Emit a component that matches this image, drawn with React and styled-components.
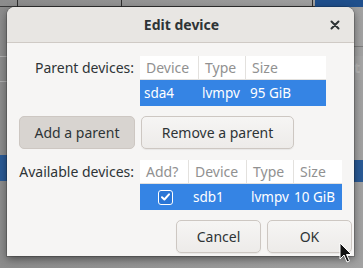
import React from "react"
import styled, { createGlobalStyle } from "styled-components"

const GlobalStyle = createGlobalStyle`
  html, body { margin: 0; padding: 0; }
  body {
    background: #959595;
    font-family: "Noto Sans", "Open Sans", sans-serif;
    color: #2e3436;
  }
`

const Desktop = styled.div`
  position: relative;
  width: 363px;
  height: 268px;
  overflow: hidden;
  background: linear-gradient(90deg, #8c8c8c 0%, #979797 50%, #a2a2a2 100%);
`

/* pieces of the dimmed window behind the dialog */
const Behind = styled.div`
  position: absolute;
  left: ${p => p.x}px;
  top: ${p => p.y}px;
  width: ${p => p.w}px;
  height: ${p => p.h}px;
  background: ${p => p.bg || "transparent"};
  border-bottom: ${p => (p.line ? `1px solid ${p.line}` : "none")};
  color: #b8b8b8;
  font-size: 14px;
  font-weight: bold;
  line-height: ${p => p.h}px;
  overflow: hidden;
`

const Dialog = styled.div`
  position: absolute;
  left: 7px;
  top: 7px;
  width: 347px;
  height: 249px;
  background: #f6f5f4;
  border-radius: 8px 8px 0 0;
  box-shadow: 0 0 0 1px rgba(0, 0, 0, 0.18), 0 3px 9px rgba(0, 0, 0, 0.45);
  display: flex;
  flex-direction: column;
  overflow: hidden;
`

const HeaderBar = styled.div`
  height: 36px;
  flex: none;
  display: flex;
  align-items: center;
  justify-content: center;
  position: relative;
  background: #e8e6e3;
  border-bottom: 1px solid #cfcac5;
  box-sizing: border-box;
`

const Title = styled.div`
  font-weight: bold;
  font-size: 14px;
  color: #2e3436;
  margin-left: 2px;
`

const CloseButton = styled.div`
  position: absolute;
  right: 14px;
  top: 13px;
  width: 10px;
  height: 10px;
  display: flex;
`

const Body = styled.div`
  flex: 1;
  padding: 13px 2px 0 12px;
  display: flex;
  flex-direction: column;
`

const FieldRow = styled.div`
  display: grid;
  grid-template-columns: 115px auto;
  column-gap: 6px;
  align-items: start;
  margin-bottom: ${p => p.gap || 0}px;
`

const Label = styled.div`
  text-align: right;
  font-size: 14px;
  height: 24px;
  line-height: 24px;
  white-space: nowrap;
`

const Table = styled.div`
  display: grid;
  grid-template-columns: ${p => p.cols};
  justify-self: start;
  background: #ffffff;
`

const HeadCell = styled.div`
  height: 24px;
  line-height: 24px;
  padding-left: 6px;
  font-size: 14px;
  color: #919191;
  border-left: ${p => (p.first ? "none" : "1px solid #e3e1de")};
  border-bottom: 1px solid #e3e1de;
  box-sizing: border-box;
  white-space: nowrap;
  overflow: hidden;
`

const Cell = styled.div`
  height: 26px;
  line-height: 25px;
  padding-left: ${p => (p.pad === undefined ? 4 : p.pad)}px;
  font-size: 13.5px;
  color: #ffffff;
  background: #3584e4;
  white-space: nowrap;
  overflow: hidden;
  display: flex;
  align-items: center;
  justify-content: ${p => (p.center ? "center" : "flex-start")};
`

const Check = styled.div`
  width: 13px;
  height: 13px;
  border: 1px solid #ffffff;
  border-radius: 3px;
  background: #2a76d6;
  display: flex;
  align-items: center;
  justify-content: center;
  margin-left: 3px;
`

const ButtonRow = styled.div`
  display: flex;
  gap: 6px;
  margin-bottom: ${p => p.gap || 0}px;
  justify-content: ${p => (p.end ? "flex-end" : "flex-start")};
`

const Button = styled.div`
  width: ${p => p.w}px;
  height: 33px;
  box-sizing: border-box;
  border-radius: 5px;
  border: 1px solid #cdc7c2;
  background: ${p =>
    p.active ? "#d8d4d0" : "linear-gradient(#f6f5f4, #edebe9)"};
  box-shadow: ${p => (p.active ? "none" : "0 1px 1px rgba(0,0,0,0.06)")};
  display: flex;
  align-items: center;
  justify-content: center;
  font-size: 14px;
  color: #2e3436;
`

const Cursor = styled.svg`
  position: absolute;
  left: 339px;
  top: 242px;
`

const App = () => {
  return (
    <Desktop>
      <GlobalStyle />
      <Behind x={0} y={0} w={363} h={6} line="#3a3a3a" />
      <Behind x={17} y={0} w={1} h={7} bg="#2f2f2f" />
      <Behind x={121} y={0} w={1} h={7} bg="#2f2f2f" />
      <Behind x={312} y={0} w={1} h={7} bg="#2f2f2f" />
      <Behind x={315} y={0} w={48} h={7} bg="#1f4f8c" />
      <Behind x={0} y={56} w={7} h={1} bg="#b0b0b0" />
      <Behind x={0} y={81} w={7} h={1} bg="#b0b0b0" />
      <Behind x={0} y={155} w={7} h={26} bg="#2a5a95" />
      <Behind x={354} y={46} w={9} h={1} bg="#7d7d7d" />
      <Behind x={354} y={56} w={9} h={24} bg="#a6a6a6">t</Behind>
      <Behind x={354} y={160} w={9} h={22} bg="#2a5a95" />

      <Dialog>
        <HeaderBar>
          <Title>Edit device</Title>
          <CloseButton>
            <svg width="10" height="10" viewBox="0 0 10 10">
              <path d="M1.5 1.5 L8.5 8.5 M8.5 1.5 L1.5 8.5" stroke="#2e3436" strokeWidth="2" strokeLinecap="round" />
            </svg>
          </CloseButton>
        </HeaderBar>

        <Body>
          <FieldRow gap={10}>
            <Label>Parent devices:</Label>
            <Table cols="58px 47px 81px">
              <HeadCell first>Device</HeadCell>
              <HeadCell>Type</HeadCell>
              <HeadCell>Size</HeadCell>
              <Cell pad={4}>sda4</Cell>
              <Cell pad={4}>lvmpv</Cell>
              <Cell pad={5}>95 GiB</Cell>
            </Table>
          </FieldRow>

          <ButtonRow gap={11}>
            <Button w={116} active>Add a parent</Button>
            <Button w={153}>Remove a parent</Button>
          </ButtonRow>

          <FieldRow gap={10}>
            <Label>Available devices:</Label>
            <Table cols="48px 58px 47px 49px">
              <HeadCell first>Add?</HeadCell>
              <HeadCell>Device</HeadCell>
              <HeadCell>Type</HeadCell>
              <HeadCell>Size</HeadCell>
              <Cell center pad={0}>
                <Check>
                  <svg width="9" height="8" viewBox="0 0 9 8">
                    <path d="M1 4.2 L3.4 6.5 L8 1.3" stroke="#ffffff" strokeWidth="2" fill="none" strokeLinecap="round" strokeLinejoin="round" />
                  </svg>
                </Check>
              </Cell>
              <Cell pad={5}>sdb1</Cell>
              <Cell pad={5}>lvmpv</Cell>
              <Cell pad={1}>10 GiB</Cell>
            </Table>
          </FieldRow>

          <ButtonRow end>
            <Button w={85}>Cancel</Button>
            <Button w={85}>OK</Button>
          </ButtonRow>
        </Body>
      </Dialog>

      <Cursor width="14" height="22" viewBox="0 0 14 22">
        <path d="M1 1 L1 17 L5 13 L8 20 L10.5 19 L7.5 12.5 L12.5 12.5 Z" fill="#111" stroke="#fff" strokeWidth="1" strokeLinejoin="round" />
      </Cursor>
    </Desktop>
  )
}

export default App
